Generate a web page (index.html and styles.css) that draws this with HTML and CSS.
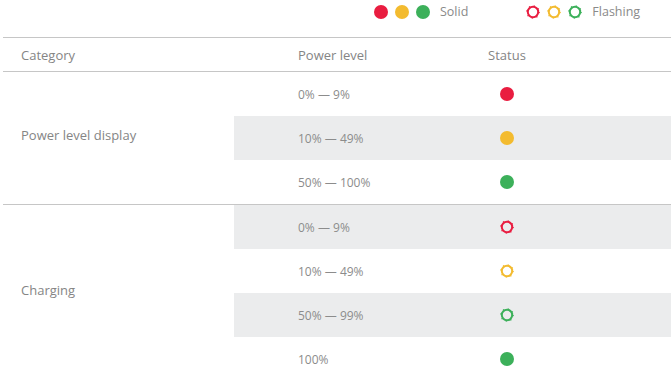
FILE: index.html
```html
<!DOCTYPE html>
<html>
<head>
<meta charset="utf-8">
<link rel="stylesheet" href="styles.css">
</head>
<body>
<div class="legend">
  <div class="legend-group">
    <span class="dot red"></span>
    <span class="dot yellow"></span>
    <span class="dot green"></span>
    <span class="legend-label">Solid</span>
  </div>
  <div class="legend-group flashing-group">
    <svg class="ring red-ring" viewBox="0 0 14 14"><circle cx="7" cy="7" r="5.2"/><circle class="teeth" cx="7" cy="7" r="6.2"/></svg>
    <svg class="ring yellow-ring" viewBox="0 0 14 14"><circle cx="7" cy="7" r="5.2"/><circle class="teeth" cx="7" cy="7" r="6.2"/></svg>
    <svg class="ring green-ring" viewBox="0 0 14 14"><circle cx="7" cy="7" r="5.2"/><circle class="teeth" cx="7" cy="7" r="6.2"/></svg>
    <span class="legend-label">Flashing</span>
  </div>
</div>

<div class="table">
  <div class="head">
    <div class="cell cat">Category</div>
    <div class="cell power">Power level</div>
    <div class="cell status">Status</div>
  </div>

  <div class="group">
    <div class="cell cat">Power level display</div>
    <div class="rows">
      <div class="row">
        <div class="cell power val">0% — 9%</div>
        <div class="cell status"><span class="dot red"></span></div>
      </div>
      <div class="row shaded">
        <div class="cell power val">10% — 49%</div>
        <div class="cell status"><span class="dot yellow"></span></div>
      </div>
      <div class="row">
        <div class="cell power val">50% — 100%</div>
        <div class="cell status"><span class="dot green"></span></div>
      </div>
    </div>
  </div>

  <div class="group">
    <div class="cell cat">Charging</div>
    <div class="rows">
      <div class="row shaded">
        <div class="cell power val">0% — 9%</div>
        <div class="cell status"><svg class="ring red-ring" viewBox="0 0 14 14"><circle cx="7" cy="7" r="5.2"/><circle class="teeth" cx="7" cy="7" r="6.2"/></svg></div>
      </div>
      <div class="row">
        <div class="cell power val">10% — 49%</div>
        <div class="cell status"><svg class="ring yellow-ring" viewBox="0 0 14 14"><circle cx="7" cy="7" r="5.2"/><circle class="teeth" cx="7" cy="7" r="6.2"/></svg></div>
      </div>
      <div class="row shaded">
        <div class="cell power val">50% — 99%</div>
        <div class="cell status"><svg class="ring green-ring" viewBox="0 0 14 14"><circle cx="7" cy="7" r="5.2"/><circle class="teeth" cx="7" cy="7" r="6.2"/></svg></div>
      </div>
      <div class="row">
        <div class="cell power val">100%</div>
        <div class="cell status"><span class="dot green"></span></div>
      </div>
    </div>
  </div>
</div>
</body>
</html>
```

FILE: styles.css
```css
* { box-sizing: border-box; }

html, body {
  margin: 0;
  padding: 0;
  background: #ffffff;
  overflow: hidden;
}

body {
  width: 671px;
  height: 378px;
  font-family: "Open Sans", "Lato", sans-serif;
  color: #858585;
}

.legend {
  height: 37px;
  display: flex;
  align-items: flex-start;
  padding-top: 5px;
  padding-left: 374px;
}

.legend-group {
  display: flex;
  align-items: center;
  gap: 7px;
  height: 14px;
}

.flashing-group {
  margin-left: 58px;
}

.legend-label {
  font-size: 12.5px;
  line-height: 14px;
  margin-left: 3px;
  color: #8a8a8a;
}

.dot {
  display: block;
  width: 14px;
  height: 14px;
  border-radius: 50%;
}

.dot.red { background: #e91d40; }
.dot.yellow { background: #f3bb2f; }
.dot.green { background: #3cb05a; }

.ring {
  display: block;
  width: 14px;
  height: 14px;
  fill: none;
}

.ring circle {
  stroke-width: 2;
}

.ring .teeth {
  stroke-width: 1.2;
  stroke-dasharray: 1.1 3.77;
}

.red-ring circle { stroke: #e91d40; }
.yellow-ring circle { stroke: #f3bb2f; }
.green-ring circle { stroke: #3cb05a; }

.table {
  margin-left: 3px;
  border-top: 1px solid #c6c6c6;
}

.head {
  display: flex;
  height: 34px;
  align-items: center;
  border-bottom: 1px solid #c6c6c6;
  font-size: 13px;
}

.cell.cat {
  width: 231px;
  padding-left: 18px;
  flex-shrink: 0;
}

.cell.power {
  width: 226px;
  padding-left: 64px;
  flex-shrink: 0;
}

.cell.status {
  width: 94px;
  flex-shrink: 0;
  display: flex;
  justify-content: center;
}

.group {
  display: flex;
  border-bottom: 1px solid #c6c6c6;
}

.group:last-child {
  border-bottom: none;
}

.group > .cell.cat {
  display: flex;
  align-items: center;
  padding-bottom: 6px;
  font-size: 13px;
}

.rows {
  flex: 1;
  display: flex;
  flex-direction: column;
}

.row {
  display: flex;
  align-items: center;
  height: 44px;
}

.row.shaded {
  background: #ebeced;
}

.val {
  font-family: "Open Sans", sans-serif;
  font-size: 12px;
  color: #8c8c8c;
}
```
